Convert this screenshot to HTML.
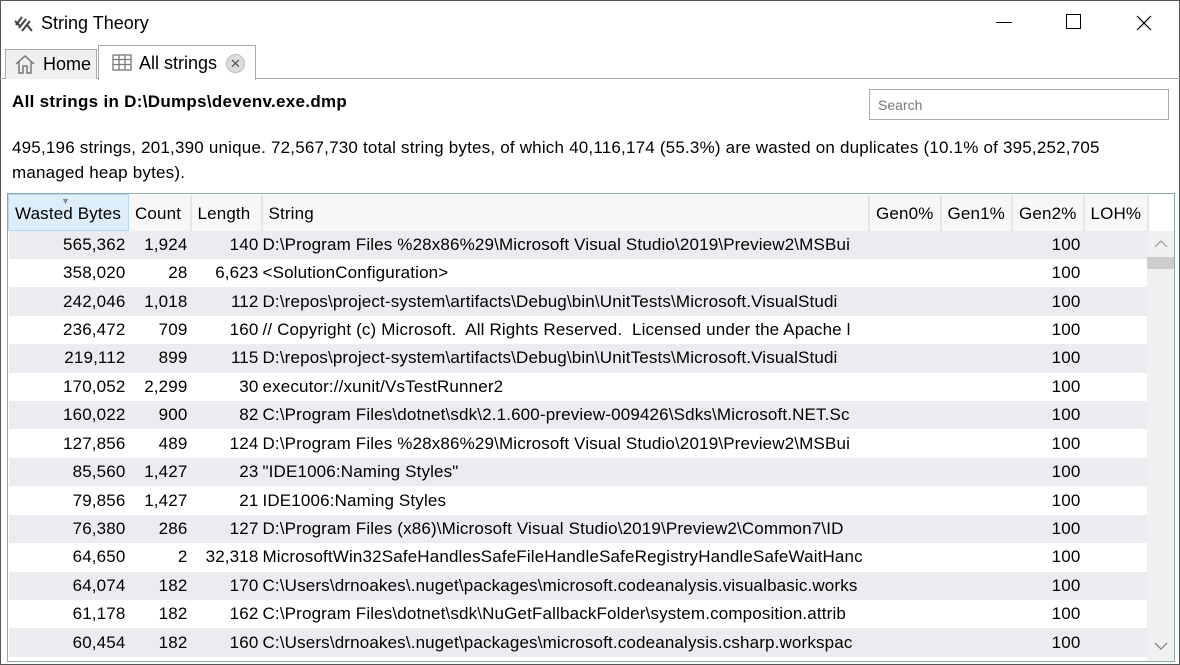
<!DOCTYPE html>
<html><head><style>
*{margin:0;padding:0;box-sizing:border-box}
body{width:1180px;height:665px;overflow:hidden;background:#fff;font-family:"Liberation Sans",sans-serif;font-size:16px;color:#000;position:relative}
.win{position:absolute;left:0;top:0;width:1180px;height:665px;border:1px solid #555}
.abs{position:absolute;white-space:nowrap}
.tab{position:absolute;border:1px solid #aaa;border-bottom:none}
table{border-collapse:collapse;table-layout:fixed}
td{height:28.43px;padding:0 3px;white-space:nowrap;overflow:hidden;font-size:17px;letter-spacing:0.15px}
th{font-weight:normal;height:36px;background:#f7f7f7;border-right:2px solid #e6e6e6;text-align:left;padding:2px 6px 0;font-size:17px;letter-spacing:0.15px}
.r{text-align:right}
tr.g td{background:#ececf0}
</style></head><body>
<div class="win"></div>
<svg class="abs" style="left:13px;top:13px" width="22" height="22" viewBox="0 0 22 22" fill="none" stroke="#444" stroke-width="2"><path d="M3 12 L9 4 M6 15 L13 6 M9 18 L17 8 M2 8 L8 14 M14 12 L19 18"/></svg>
<div class="abs" style="left:41px;top:13px;font-size:18px">String Theory</div>
<div class="abs" style="left:996px;top:22px;width:16px;height:1px;background:#000"></div>
<div class="abs" style="left:1066px;top:14px;width:15px;height:15px;border:1px solid #000"></div>
<svg class="abs" style="left:1136px;top:15px" width="16" height="16" viewBox="0 0 16 16" stroke="#000" stroke-width="1.2"><path d="M1 1L15 15M15 1L1 15"/></svg>
<div class="abs" style="left:0;top:78px;width:1180px;height:1px;background:#aaa"></div>
<div class="tab" style="left:5px;top:49px;width:92px;height:30px;background:#f0f0f0"></div>
<svg class="abs" style="left:14px;top:54px" width="22" height="20" viewBox="0 0 22 20" fill="none" stroke="#777" stroke-width="1.5"><path d="M2 10 L11 2 L20 10 M5 8 V19 H9 V12 H13 V19 H17 V8"/></svg>
<div class="abs" style="left:43px;top:54px;font-size:18px">Home</div>
<div class="tab" style="left:98px;top:45px;width:158px;height:35px;background:#fff"></div>
<svg class="abs" style="left:112px;top:54px" width="20" height="17" viewBox="0 0 20 17" fill="none" stroke="#777" stroke-width="1.3"><rect x="1" y="1" width="18" height="15"/><path d="M1 5.5H19M1 10.5H19M7 1V16M13 1V16"/></svg>
<div class="abs" style="left:139px;top:53px;font-size:18px">All strings</div>
<div class="abs" style="left:226px;top:54px;width:19px;height:19px;border-radius:50%;background:#ddd;border:1px solid #bbb;font-size:13px;text-align:center;line-height:17px;color:#555">✕</div>
<div class="abs" style="left:12px;top:92px;font-weight:bold;font-size:17px;letter-spacing:0.3px">All strings in D:\Dumps\devenv.exe.dmp</div>
<div class="abs" style="left:869px;top:89px;width:300px;height:31px;border:1px solid #aaa;font-size:14px;color:#777;padding:7px 8px">Search</div>
<div class="abs" style="left:12px;top:135px;line-height:25px;font-size:17px;letter-spacing:0.2px">495,196 strings, 201,390 unique. 72,567,730 total string bytes, of which 40,116,174 (55.3%) are wasted on duplicates (10.1% of 395,252,705<br>managed heap bytes).</div>
<div class="abs" style="left:7px;top:193px;width:1168px;height:469px;border:1px solid #8aa"></div>
<div class="abs" style="left:8px;top:194px;width:1166px;height:467px;overflow:hidden">
<table style="width:1139px">
<colgroup><col style="width:120px"><col style="width:62px"><col style="width:71px"><col style="width:607px"><col style="width:72px"><col style="width:71px"><col style="width:72px"><col style="width:64px"></colgroup>
<tr><th style="background:#ddeefa;border:1px solid #b8d6ee;position:relative">Wasted Bytes<span style="position:absolute;left:52px;top:1px;font-size:9px;color:#889">▼</span></th><th>Count</th><th>Length</th><th>String</th><th class="r">Gen0%</th><th class="r">Gen1%</th><th class="r">Gen2%</th><th class="r">LOH%</th></tr>
<tr class="g"><td class="r">565,362</td><td class="r">1,924</td><td class="r">140</td><td style="padding-left:1px">D:\Program Files %28x86%29\Microsoft Visual Studio\2019\Preview2\MSBui</td><td></td><td></td><td class="r">100</td><td></td></tr>
<tr><td class="r">358,020</td><td class="r">28</td><td class="r">6,623</td><td style="padding-left:1px">&lt;SolutionConfiguration&gt;</td><td></td><td></td><td class="r">100</td><td></td></tr>
<tr class="g"><td class="r">242,046</td><td class="r">1,018</td><td class="r">112</td><td style="padding-left:1px">D:\repos\project-system\artifacts\Debug\bin\UnitTests\Microsoft.VisualStudi</td><td></td><td></td><td class="r">100</td><td></td></tr>
<tr><td class="r">236,472</td><td class="r">709</td><td class="r">160</td><td style="padding-left:1px">// Copyright (c) Microsoft.&nbsp; All Rights Reserved.&nbsp; Licensed under the Apache l</td><td></td><td></td><td class="r">100</td><td></td></tr>
<tr class="g"><td class="r">219,112</td><td class="r">899</td><td class="r">115</td><td style="padding-left:1px">D:\repos\project-system\artifacts\Debug\bin\UnitTests\Microsoft.VisualStudi</td><td></td><td></td><td class="r">100</td><td></td></tr>
<tr><td class="r">170,052</td><td class="r">2,299</td><td class="r">30</td><td style="padding-left:1px">executor://xunit/VsTestRunner2</td><td></td><td></td><td class="r">100</td><td></td></tr>
<tr class="g"><td class="r">160,022</td><td class="r">900</td><td class="r">82</td><td style="padding-left:1px">C:\Program Files\dotnet\sdk\2.1.600-preview-009426\Sdks\Microsoft.NET.Sc</td><td></td><td></td><td class="r">100</td><td></td></tr>
<tr><td class="r">127,856</td><td class="r">489</td><td class="r">124</td><td style="padding-left:1px">D:\Program Files %28x86%29\Microsoft Visual Studio\2019\Preview2\MSBui</td><td></td><td></td><td class="r">100</td><td></td></tr>
<tr class="g"><td class="r">85,560</td><td class="r">1,427</td><td class="r">23</td><td style="padding-left:1px">"IDE1006:Naming Styles"</td><td></td><td></td><td class="r">100</td><td></td></tr>
<tr><td class="r">79,856</td><td class="r">1,427</td><td class="r">21</td><td style="padding-left:1px">IDE1006:Naming Styles</td><td></td><td></td><td class="r">100</td><td></td></tr>
<tr class="g"><td class="r">76,380</td><td class="r">286</td><td class="r">127</td><td style="padding-left:1px">D:\Program Files (x86)\Microsoft Visual Studio\2019\Preview2\Common7\ID</td><td></td><td></td><td class="r">100</td><td></td></tr>
<tr><td class="r">64,650</td><td class="r">2</td><td class="r">32,318</td><td style="padding-left:1px">MicrosoftWin32SafeHandlesSafeFileHandleSafeRegistryHandleSafeWaitHanc</td><td></td><td></td><td class="r">100</td><td></td></tr>
<tr class="g"><td class="r">64,074</td><td class="r">182</td><td class="r">170</td><td style="padding-left:1px">C:\Users\drnoakes\.nuget\packages\microsoft.codeanalysis.visualbasic.works</td><td></td><td></td><td class="r">100</td><td></td></tr>
<tr><td class="r">61,178</td><td class="r">182</td><td class="r">162</td><td style="padding-left:1px">C:\Program Files\dotnet\sdk\NuGetFallbackFolder\system.composition.attrib</td><td></td><td></td><td class="r">100</td><td></td></tr>
<tr class="g"><td class="r">60,454</td><td class="r">182</td><td class="r">160</td><td style="padding-left:1px">C:\Users\drnoakes\.nuget\packages\microsoft.codeanalysis.csharp.workspac</td><td></td><td></td><td class="r">100</td><td></td></tr>
</table>
</div>
<div class="abs" style="left:1147px;top:231px;width:27px;height:430px;background:#f0f0f0"></div>
<div class="abs" style="left:1147px;top:257px;width:27px;height:12px;background:#cdcdcd"></div>
<svg class="abs" style="left:1154px;top:240px" width="14" height="8" viewBox="0 0 14 8" fill="none" stroke="#999" stroke-width="1.2"><path d="M1 7L7 1L13 7"/></svg>
<svg class="abs" style="left:1154px;top:642px" width="14" height="8" viewBox="0 0 14 8" fill="none" stroke="#777" stroke-width="1.2"><path d="M1 1L7 7L13 1"/></svg>
</body></html>
